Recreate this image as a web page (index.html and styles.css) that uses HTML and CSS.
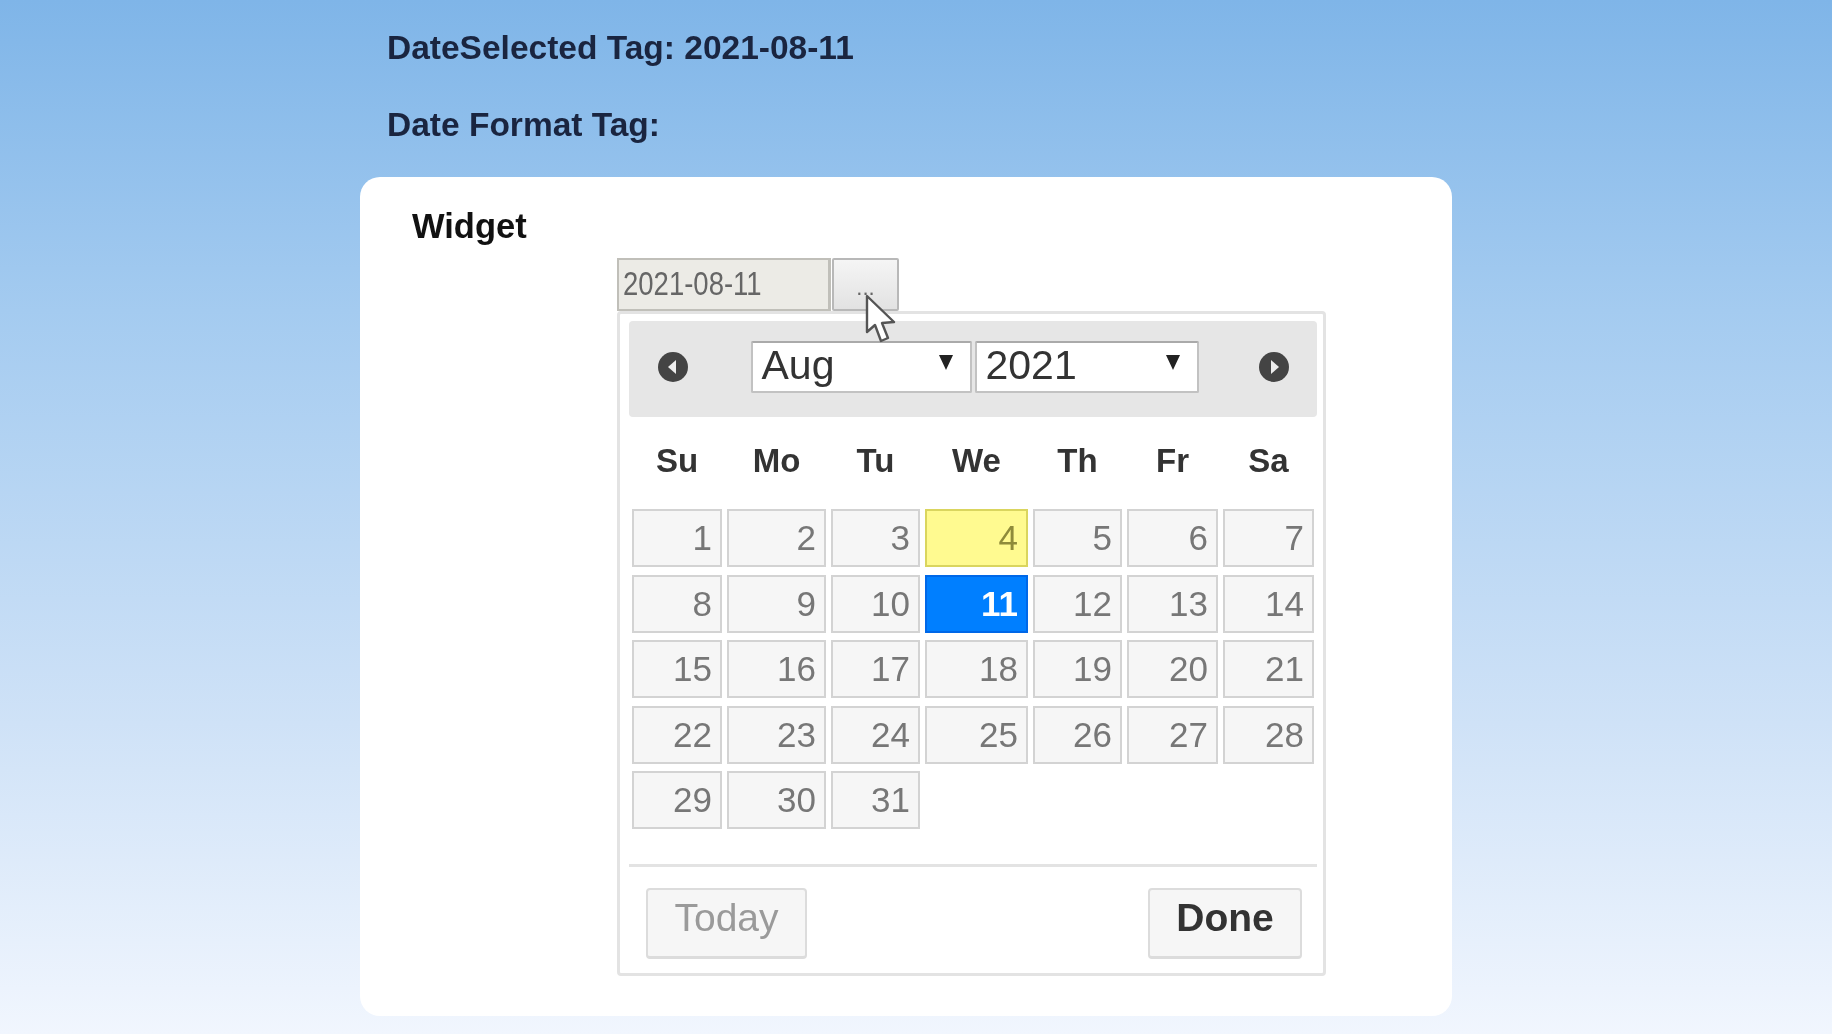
FILE: index.html
```html
<!DOCTYPE html>
<html lang="en">
<head>
<meta charset="utf-8">
<title>Datepicker</title>
<link rel="stylesheet" href="styles.css">
</head>
<body>
<main class="page">
  <p class="tag">DateSelected Tag: 2021-08-11</p>
  <p class="tag">Date Format Tag:</p>
  <section class="card">
    <h2 class="widget-title">Widget</h2>
    <div class="picker">
      <div class="field">
        <div class="date-input"><span class="tall">2021-08-11</span></div>
        <button class="trigger" type="button">...</button>
        <svg class="cursor" viewBox="0 0 32 52" width="32" height="52"><path d="M2 2 L2 38 L10 31 L16 47 L23 44 L17 29 L29 28 Z" fill="#fff" stroke="#555" stroke-width="2.4" stroke-linejoin="round"/></svg>
      </div>
      <div class="popup">
        <div class="head">
          <svg class="nav" viewBox="0 0 32 32" width="32" height="32"><circle cx="16" cy="16" r="15" fill="#444"/><path d="M19 9 L11 16 L19 23 Z" fill="#eee"/></svg>
          <div class="selects">
            <div class="select select-month"><span>Aug</span><i class="arrow"></i></div>
            <div class="select select-year"><span>2021</span><i class="arrow"></i></div>
          </div>
          <svg class="nav" viewBox="0 0 32 32" width="32" height="32"><circle cx="16" cy="16" r="15" fill="#444"/><path d="M13 9 L21 16 L13 23 Z" fill="#eee"/></svg>
        </div>
        <div class="grid weekdays">
          <span>Su</span><span>Mo</span><span>Tu</span><span>We</span><span>Th</span><span>Fr</span><span>Sa</span>
        </div>
        <div class="grid days">
          <a>1</a><a>2</a><a>3</a><a class="today">4</a><a>5</a><a>6</a><a>7</a>
          <a>8</a><a>9</a><a>10</a><a class="active">11</a><a>12</a><a>13</a><a>14</a>
          <a>15</a><a>16</a><a>17</a><a>18</a><a>19</a><a>20</a><a>21</a>
          <a>22</a><a>23</a><a>24</a><a>25</a><a>26</a><a>27</a><a>28</a>
          <a>29</a><a>30</a><a>31</a>
        </div>
        <div class="foot">
          <button class="btn btn-today" type="button">Today</button>
          <button class="btn btn-done" type="button">Done</button>
        </div>
      </div>
    </div>
  </section>
</main>
</body>
</html>
```

FILE: styles.css
```css
* { box-sizing: border-box; }
html, body { margin: 0; height: 1034px; overflow: hidden; }
body {
  background: linear-gradient(180deg, #7fb5e8 0%, #a4cbf0 30%, #cfe2f7 70%, #f1f6fe 100%);
  font-family: "Liberation Sans", Arial, sans-serif;
  color: #333;
}
.page { width: 1092px; margin-left: 360px; padding-top: 29px; filter: blur(0.45px); }
.tag {
  margin: 0 0 39px;
  padding-left: 27px;
  font-size: 33.5px;
  line-height: 38px;
  font-weight: 700;
  color: #1a2540;
}
.card {
  height: 839px;
  margin-top: -6px;
  background: #fff;
  border-radius: 20px;
  padding: 28px 0 0 52px;
}
.widget-title {
  margin: 0 0 11px;
  font-size: 34.5px;
  line-height: 42px;
  font-weight: 700;
  color: #111;
}
.picker { margin-left: 205px; width: 709px; }
.field { display: flex; position: relative; height: 53px; }
.date-input {
  width: 214px;
  background: #ecebe6;
  border: 2px solid #c0bfb9;
  border-right-width: 3px;
  color: #666;
  font-size: 27.5px;
  line-height: 48px;
  padding-left: 4px;
}
.tall { display: inline-block; transform: scaleY(1.18); }
.trigger {
  width: 67px;
  margin-left: 1px;
  background: linear-gradient(#f5f5f5, #e2e2e2);
  border: 2px solid #b8b8b8;
  border-radius: 2px;
  color: #666;
  font: 22px/40px "Liberation Sans", sans-serif;
  padding: 6px 0 0;
}
.cursor { position: absolute; left: 248px; top: 36px; }
.popup {
  height: 665px;
  border: 3px solid #e3e3e3;
  border-radius: 4px;
  padding: 7px 6px 7px 9px;
  background: #fff;
}
.head {
  height: 96px;
  background: #e6e6e6;
  border-radius: 4px;
  display: flex;
  align-items: center;
  justify-content: space-between;
  padding: 0 27px 4px 28px;
}
.selects { display: flex; gap: 3px; margin-left: 2px; }
.select {
  height: 52px;
  background: #fff;
  border: 2px solid #c2c2c2;
  border-top-color: #aaa;
  border-radius: 2px;
  display: flex;
  align-items: center;
  justify-content: space-between;
  padding: 0 17px 4px 9px;
  font-size: 41px;
  color: #333;
}
.select-month { width: 221px; }
.select-year { width: 224px; }
.arrow {
  width: 0; height: 0;
  border-left: 7px solid transparent;
  border-right: 7px solid transparent;
  border-top: 15px solid #222;
  margin-bottom: 6px;
}
.grid {
  display: grid;
  grid-template-columns: 90px 99px 89px 103px 89px 91px 91px;
  column-gap: 5px;
  margin-left: 3px;
}
.weekdays {
  height: 92px;
  align-items: center;
  text-align: center;
  font-size: 33px;
  font-weight: 700;
  color: #333;
  padding-bottom: 4px;
}
.days { row-gap: 7.5px; grid-auto-rows: 58px; height: 322px; }
.days a {
  display: block;
  background: #f6f6f6;
  border: 2px solid #d3d3d3;
  color: #777;
  font-size: 35px;
  line-height: 53px;
  text-align: right;
  padding-right: 8px;
}
.days .today { background: #fffa90; border-color: #dad55e; color: #8f8b3a; }
.days .active { background: #007fff; border-color: #0068e8; color: #fff; font-weight: 700; }
.foot {
  border-top: 3px solid #e3e3e3;
  margin-top: 33px;
  padding: 21px 15px 0 17px;
  display: flex;
  justify-content: space-between;
}
.btn {
  height: 71px;
  background: #f6f6f6;
  border: 2px solid #dcdcdc;
  border-bottom-width: 3px;
  border-radius: 4px;
  font-family: "Liberation Sans", sans-serif;
  font-size: 39px;
  padding: 0 0 11px;
}
.btn-today { width: 161px; color: #9a9a9a; }
.btn-done { width: 154px; color: #333; font-weight: 700; }
```
